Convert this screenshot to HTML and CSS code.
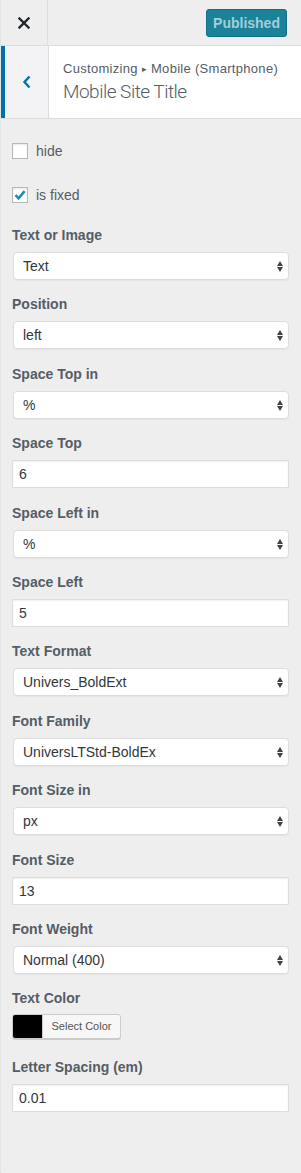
FILE: index.html
```html
<!DOCTYPE html>
<html lang="en">
  <head>
    <meta charset="UTF-8" />
    <meta name="viewport" content="width=device-width, initial-scale=1.0" />
    <title>Customizing Mobile Site Title</title>
    <link rel="stylesheet" href="styles.css">
  </head>
  <body>
    <header class="topbar">
      <button class="close" aria-label="Close">
        <svg width="12" height="12" viewBox="0 0 12 12">
          <path d="M1.5 1.5 L10.5 10.5 M10.5 1.5 L1.5 10.5" stroke="#23282d" stroke-width="2.4" stroke-linecap="square" fill="none" />
        </svg>
      </button>
      <button class="publish">Published</button>
    </header>

    <section class="title">
      <button class="back" aria-label="Back">
        <svg width="10" height="14" viewBox="0 0 10 14">
          <path d="M7.5 1.5 L2.5 7 L7.5 12.5" stroke="#0073aa" stroke-width="2.4" fill="none" />
        </svg>
      </button>
      <div class="title-text">
        <p class="crumb">Customizing <span class="sep">▸</span> Mobile (Smartphone)</p>
        <h1>Mobile Site Title</h1>
      </div>
    </section>

    <main class="controls">
      <label class="check">
        <span class="box"></span>
        hide
      </label>
      <label class="check">
        <span class="box">
          <svg width="14" height="14" viewBox="0 0 14 14">
            <path d="M2.5 7.2 L5.6 10.3 L11.6 3.2" stroke="#1e8cbe" stroke-width="2.6" fill="none" />
          </svg>
        </span>
        is fixed
      </label>

      <div class="field">
        <p class="label">Text or Image</p>
        <div class="select"><span>Text</span></div>
      </div>
      <div class="field">
        <p class="label">Position</p>
        <div class="select"><span>left</span></div>
      </div>
      <div class="field">
        <p class="label">Space Top in</p>
        <div class="select"><span>%</span></div>
      </div>
      <div class="field">
        <p class="label">Space Top</p>
        <div class="input">6</div>
      </div>
      <div class="field">
        <p class="label">Space Left in</p>
        <div class="select"><span>%</span></div>
      </div>
      <div class="field">
        <p class="label">Space Left</p>
        <div class="input">5</div>
      </div>
      <div class="field">
        <p class="label">Text Format</p>
        <div class="select"><span>Univers_BoldExt</span></div>
      </div>
      <div class="field">
        <p class="label">Font Family</p>
        <div class="select"><span>UniversLTStd-BoldEx</span></div>
      </div>
      <div class="field">
        <p class="label">Font Size in</p>
        <div class="select"><span>px</span></div>
      </div>
      <div class="field">
        <p class="label">Font Size</p>
        <div class="input">13</div>
      </div>
      <div class="field">
        <p class="label">Font Weight</p>
        <div class="select"><span>Normal (400)</span></div>
      </div>
      <div class="field color-field">
        <p class="label">Text Color</p>
        <button class="color">
          <span class="swatch"></span>
          <span class="color-text">Select Color</span>
        </button>
      </div>
      <div class="field">
        <p class="label">Letter Spacing (em)</p>
        <div class="input">0.01</div>
      </div>
    </main>
  </body>
</html>
```

FILE: styles.css
```css
* {
  margin: 0;
  padding: 0;
  box-sizing: border-box;
}

body {
  font-family: "Liberation Sans", Arial, sans-serif;
  font-size: 14px;
  color: #555d66;
  background-color: #eee;
  border-left: 1px dotted #ddd;
  min-height: 1173px;
}

button {
  font-family: inherit;
  border: none;
  background: none;
  cursor: pointer;
}

/* TOP BAR */
.topbar {
  height: 46px;
  display: flex;
  align-items: center;
  justify-content: space-between;
  border-bottom: 1px solid #ddd;
}

.close {
  width: 47px;
  height: 45px;
  border-right: 1px solid #ddd;
  display: flex;
  align-items: center;
  justify-content: center;
}

.publish {
  margin-right: 14px;
  width: 81px;
  height: 28px;
  background-color: #1a8299;
  border: 1px solid #136f86;
  border-radius: 3px;
  color: #a3cdd9;
  font-size: 14px;
  font-weight: bold;
}

/* SECTION TITLE */
.title {
  display: flex;
  height: 73px;
  background-color: #fff;
  border-bottom: 1px solid #ddd;
}

.back {
  width: 48px;
  background-color: #f3f3f5;
  border-left: 4px solid #0073aa;
  border-right: 1px solid #ddd;
  display: flex;
  align-items: center;
  justify-content: center;
}

.title-text {
  padding: 13px 0 0 14px;
}

.crumb {
  font-size: 13px;
  line-height: 20px;
  letter-spacing: 0.3px;
  color: #555d66;
}

.sep {
  font-size: 9px;
  vertical-align: 1px;
}

h1 {
  font-family: Roboto, "Liberation Sans", sans-serif;
  font-size: 19px;
  font-weight: 300;
  line-height: 26px;
  letter-spacing: -0.5px;
  color: #555d66;
}

/* CONTROLS */
.controls {
  padding: 24px 12px 40px 11px;
}

.check {
  display: flex;
  align-items: center;
  gap: 8px;
  height: 16px;
  margin-bottom: 28px;
  line-height: 16px;
}

.check:nth-child(2) {
  margin-bottom: 22px;
}

.box {
  width: 16px;
  height: 16px;
  background-color: #fff;
  border: 1px solid #b4b9be;
  box-shadow: inset 0 1px 2px rgba(0, 0, 0, 0.1);
  display: flex;
  align-items: center;
  justify-content: center;
}

.field {
  margin-bottom: 14.4px;
}

.label {
  font-weight: bold;
  line-height: 20px;
  margin-bottom: 7px;
}

.select {
  position: relative;
  height: 28px;
  margin-left: 1px;
  background-color: #fff;
  border: 1px solid #ddd;
  border-radius: 4px;
  box-shadow: 0 1px 1px rgba(0, 0, 0, 0.04);
  color: #32373c;
  line-height: 26px;
  padding-left: 9px;
}

.select::before,
.select::after {
  content: "";
  position: absolute;
  right: 5px;
  border-left: 3.5px solid transparent;
  border-right: 3.5px solid transparent;
}

.select::before {
  top: 8px;
  border-bottom: 5px solid #444;
}

.select::after {
  top: 14px;
  border-top: 5px solid #444;
}

.input {
  height: 28px;
  background-color: #fff;
  border: 1px solid #ddd;
  box-shadow: inset 0 1px 2px rgba(0, 0, 0, 0.07);
  color: #32373c;
  line-height: 26px;
  padding-left: 6px;
}

.color-field .label {
  margin-bottom: 6px;
}

.color-field {
  margin-bottom: 18px;
}

.color {
  display: flex;
  height: 25px;
  width: 109px;
  border: 1px solid #ccc;
  border-radius: 3px;
  background-color: #f7f7f7;
  box-shadow: 0 1px 0 #ccc;
  overflow: hidden;
}

.swatch {
  width: 30px;
  height: 100%;
  background-color: #000;
  border-right: 1px solid #ccc;
}

.color-text {
  flex: 1;
  font-size: 11px;
  line-height: 23px;
  color: #555;
  text-align: center;
}
```
